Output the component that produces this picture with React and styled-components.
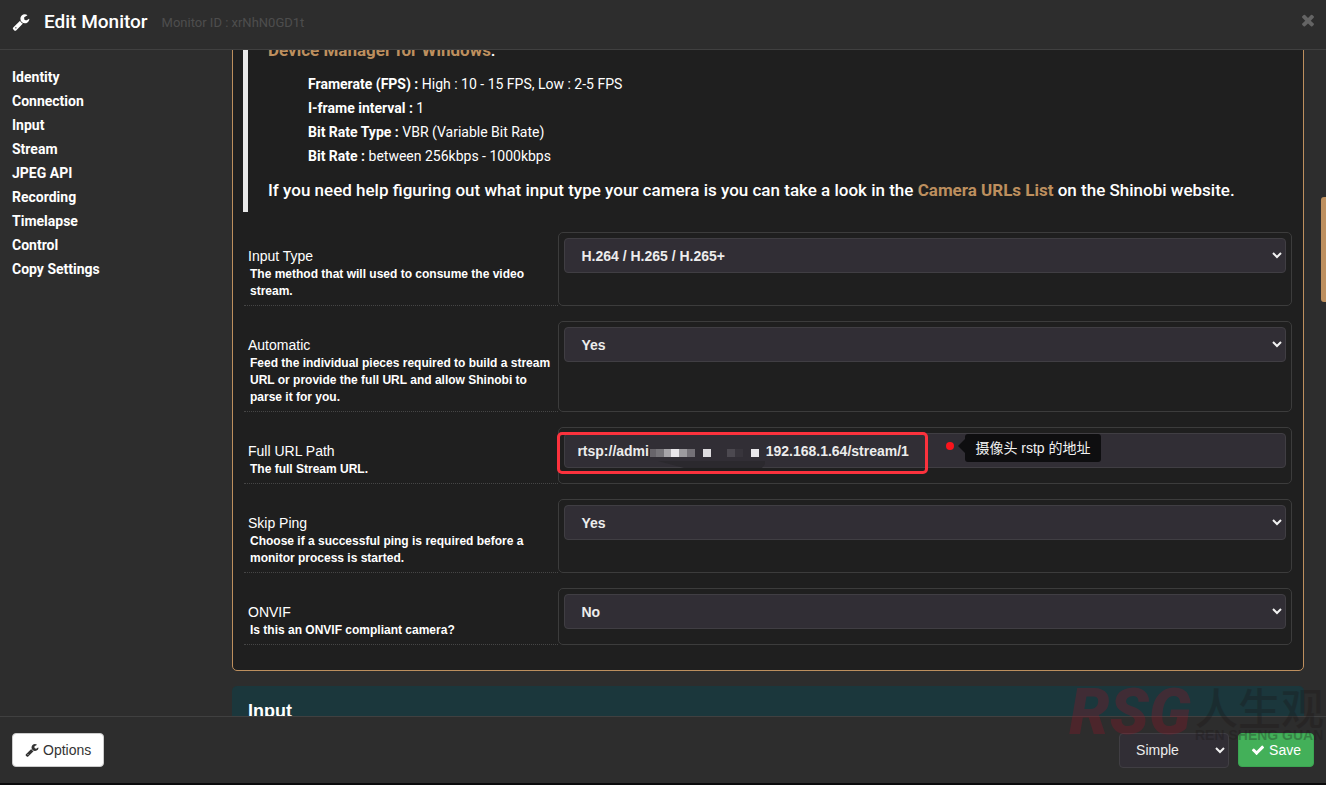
import React, { useState } from "react";
import styled, { createGlobalStyle } from "styled-components";

const GlobalStyle = createGlobalStyle`
* { box-sizing: border-box; }
body {
  margin: 0;
  background: #0b0b0c;
  color: #fff;
  font-family: Roboto, sans-serif;
  font-size: 14px;
  line-height: 20px;
}
`;

const Modal = styled.div`
position: relative;
display: flex;
flex-direction: column;
height: 100vh;
overflow: hidden;
background: #2d2d2d;
border-bottom: 2px solid #0b0b0c;
`;

const Header = styled.header`
display: flex;
flex: none;
align-items: center;
height: 50px;
padding: 0 12px 6px;
border-bottom: 1px solid #404040;
`;

const Title = styled.h4`
margin: 0 14px;
font-size: 19px;
font-weight: 500;
`;

const MonitorId = styled.small`
flex: 1;
padding-top: 3px;
font-size: 13px;
color: #4d4d4d;
`;

const CloseButton = styled.button`
display: flex;
padding: 0;
margin: 0 -3px 4px 0;
border: 0;
background: none;
color: #646464;
`;

const Body = styled.div`
position: relative;
display: flex;
flex: 1;
min-height: 0;
overflow: hidden;
`;

const Sidebar = styled.nav`
display: flex;
flex: 0 0 232px;
flex-direction: column;
align-items: flex-start;
padding: 15px 12px;
`;

const SideLink = styled.a`
color: #fff;
font-weight: 700;
line-height: 24px;
text-decoration: none;
`;

const Content = styled.main`
flex: 1;
min-width: 0;
margin-top: -24px;
padding-right: 22px;
`;

const ScrollThumb = styled.div`
position: absolute;
top: 147px;
right: 0;
width: 5px;
height: 105px;
border-radius: 3px 0 0 3px;
background: #bd8f5e;
`;

const Panel = styled.section`
padding: 11px 11px 10px;
margin-bottom: 15px;
border: 1px solid #bd8f5e;
border-radius: 5px;
background: #1f1f1f;
`;

const Quote = styled.blockquote`
margin: 0 -1px 20px;
padding: 0 20px 10px;
border-left: 5px solid #e9e9e9;
font-size: 17px;
font-weight: 500;
line-height: 24px;
p { margin: 0; }
ul {
  margin: 10px 0;
  padding-left: 40px;
  list-style: none;
  font-size: 14px;
  font-weight: 400;
}
`;

const GoldLink = styled.a`
color: #bd8f5e;
font-weight: 700;
text-decoration: none;
`;

const Row = styled.div`
display: grid;
grid-template-columns: 30% 70%;
margin-bottom: 15px;
font-family: "Liberation Sans", Arial, sans-serif;
`;

const RowLabel = styled.label`
padding: 14px 4px 5px;
border-bottom: 1px dotted #464646;
`;

const Hint = styled.small`
display: block;
padding-left: 2px;
font-size: 12px;
font-weight: 700;
line-height: 17px;
`;

const Control = styled.div`
position: relative;
padding: 5px;
border: 1px solid #3c3c3c;
border-radius: 5px;
`;

const SelectWrap = styled.div`
position: relative;
width: ${props => props.$width || "100%"};
svg {
  position: absolute;
  top: 13px;
  right: 4px;
  pointer-events: none;
}
`;

const Select = styled.select`
display: block;
width: 100%;
height: 35px;
padding: 0 16px;
appearance: none;
border: 1px solid #403e43;
border-radius: 4px;
background: #312e35;
color: #ececec;
font: ${props => (props.$light ? 400 : 700)} 14px "Liberation Sans", Arial, sans-serif;
`;

const TextInput = styled.input`
display: block;
width: 100%;
height: 35px;
padding: 0 12px;
border: 1px solid #403e43;
border-radius: 4px;
background: #312e35;
color: #ececec;
font: 700 14px "Liberation Sans", Arial, sans-serif;
`;

const RedFrame = styled.div`
position: absolute;
top: 4px;
left: -2px;
width: 371px;
height: 42px;
border: 3px solid #fb323d;
border-radius: 5px;
pointer-events: none;
`;

const Mosaic = styled.svg`
position: absolute;
top: 16px;
left: 91px;
`;

const Note = styled.div`
position: absolute;
top: 6px;
left: 387px;
display: flex;
align-items: center;
`;

const Dot = styled.span`
width: 8px;
height: 8px;
margin: 0 4px 4px 0;
border-radius: 50%;
background: #fb141c;
`;

const Arrow = styled.span`
border: 7px solid transparent;
border-left: 0;
border-right-color: #0e0e10;
margin-bottom: 4px;
`;

const NoteText = styled.span`
padding: 4px 10px;
border-radius: 3px;
background: #0e0e10;
color: #f2f2f2;
font-family: "Liberation Sans", "Noto Sans CJK SC", sans-serif;
white-space: nowrap;
`;

const InputSection = styled.section`
padding: 15px 16px;
border-radius: 5px 5px 0 0;
background: #1b373c;
h3 {
  margin: 0;
  font: 700 18px/20px "Liberation Sans", Arial, sans-serif;
}
`;

const Footer = styled.footer`
display: flex;
flex: none;
align-items: center;
justify-content: space-between;
height: 67px;
padding: 0 12px;
border-top: 1px solid #404040;
`;

const Actions = styled.div`
display: flex;
align-items: center;
gap: 9px;
`;

const Button = styled.button`
display: flex;
align-items: center;
gap: 4px;
height: 34px;
padding: 0 12px;
border: 1px solid ${props => (props.$green ? "#3ba552" : "#ccc")};
border-radius: 4px;
background: ${props => (props.$green ? "#43b059" : "#fff")};
color: ${props => (props.$green ? "#fff" : "#333")};
font: 14px "Liberation Sans", Arial, sans-serif;
`;

const Watermark = styled.div`
position: absolute;
right: 2px;
bottom: 40px;
display: flex;
align-items: center;
gap: 4px;
opacity: 0.3;
pointer-events: none;
`;

const WaterLogo = styled.span`
color: #961428;
font: italic 900 64px/60px Roboto, sans-serif;
`;

const WaterName = styled.span`
display: flex;
flex-direction: column;
color: #1a1616;
font: 500 43px/44px "Noto Sans CJK SC", sans-serif;
small {
  font: 700 14px/14px "Liberation Sans", Arial, sans-serif;
}
`;

const icons = {
  wrench: "M448 1472q0-26-19-45t-45-19-45 19-19 45 19 45 45 19 45-19 19-45zm644-420l-682 682q-37 37-90 37-52 0-91-37l-106-108q-38-36-38-90 0-53 38-91l681-681q39 98 114.5 173.5t173.5 114.5zm634-435q0 39-23 106-47 134-164.5 217.5t-258.5 83.5q-185 0-316.5-131.5t-131.5-316.5 131.5-316.5 316.5-131.5q58 0 121.5 16.5t107.5 46.5q16 11 16 28t-16 28l-293 169v224l193 107q5-3 79-48.5t135.5-81 70.5-35.5q15 0 23.5 10t8.5 25z",
  times: "M1490 1322q0 40-28 68l-136 136q-28 28-68 28t-68-28l-294-294-294 294q-28 28-68 28t-68-28l-136-136q-28-28-28-68t28-68l294-294-294-294q-28-28-28-68t28-68l136-136q28-28 68-28t68 28l294 294 294-294q28-28 68-28t68 28l136 136q28 28 28 68t-28 68l-294 294 294 294q28 28 28 68z",
  check: "M1671 566q0 40-28 68l-724 724-136 136q-28 28-68 28t-68-28l-136-136-362-362q-28-28-28-68t28-68l136-136q28-28 68-28t68 28l294 295 656-657q28-28 68-28t68 28l136 136q28 28 28 68z"
};

const Icon = ({ name, size }) => (
  <svg width={size} height={size} viewBox="0 0 1792 1792" fill="currentColor" aria-hidden="true">
    <path d={icons[name]} />
  </svg>
);

const Dropdown = ({ options, width, light, ...rest }) => (
  <SelectWrap $width={width}>
    <Select $light={light} {...rest}>
      {options.map(o => <option key={o}>{o}</option>)}
    </Select>
    <svg width="10" height="8" viewBox="0 0 10 8" fill="none" stroke="#f2f2f2" strokeWidth="2">
      <path d="M1 2l4 4 4-4" />
    </svg>
  </SelectWrap>
);

const Field = ({ id, label, hint, children }) => (
  <Row>
    <RowLabel htmlFor={id}>
      {label}
      <Hint>{hint}</Hint>
    </RowLabel>
    <Control>{children}</Control>
  </Row>
);

const sections = ["Identity", "Connection", "Input", "Stream", "JPEG API", "Recording", "Timelapse", "Control", "Copy Settings"];

// x, width and colour of each block hiding the credentials
const blocks = [
  [0, 6, "#68656b"], [6, 8, "#77757a"], [14, 7, "#a7a5a9"], [21, 8, "#e9e7ea"],
  [29, 8, "#9c9a9e"], [37, 8, "#747177"], [53, 8, "#dedcdf"], [77, 8, "#4c4950"],
  [85, 8, "#38353c"], [101, 8, "#e9e7ea"]
];

const App = () => {
  const [url, setUrl] = useState("rtsp://admi" + "\u00a0".repeat(30) + "192.168.1.64/stream/1");

  return (
    <Modal>
      <GlobalStyle />
      <Header>
        <Icon name="wrench" size={18} />
        <Title>Edit Monitor</Title>
        <MonitorId>Monitor ID : xrNhN0GD1t</MonitorId>
        <CloseButton aria-label="Close"><Icon name="times" size={18} /></CloseButton>
      </Header>
      <Body>
        <Sidebar>
          {sections.map(s => <SideLink key={s} href="#">{s}</SideLink>)}
        </Sidebar>
        <Content>
          <Panel>
            <Quote>
              <p><GoldLink href="#">Device Manager for Windows</GoldLink>.</p>
              <ul>
                <li><b>Framerate (FPS) :</b> High : 10 - 15 FPS, Low : 2-5 FPS</li>
                <li><b>I-frame interval :</b> 1</li>
                <li><b>Bit Rate Type :</b> VBR (Variable Bit Rate)</li>
                <li><b>Bit Rate :</b> between 256kbps - 1000kbps</li>
              </ul>
              <p>
                If you need help figuring out what input type your camera is you can take a look in the{" "}
                <GoldLink href="#">Camera URLs List</GoldLink> on the Shinobi website.
              </p>
            </Quote>
            <Field id="type" label="Input Type" hint="The method that will used to consume the video stream.">
              <Dropdown id="type" options={["H.264 / H.265 / H.265+", "JPEG", "MJPEG"]} />
            </Field>
            <Field id="auto" label="Automatic" hint="Feed the individual pieces required to build a stream URL or provide the full URL and allow Shinobi to parse it for you.">
              <Dropdown id="auto" options={["Yes", "No"]} />
            </Field>
            <Field id="url" label="Full URL Path" hint="The full Stream URL.">
              <TextInput id="url" value={url} onChange={e => setUrl(e.target.value)} />
              <Mosaic width="116" height="24" viewBox="0 0 116 24">
                <path d="M8 17h107v3l-3 4H34z" fill="#2b292e" />
                {blocks.map(([x, w, fill]) => <rect key={x} x={x} y="5" width={w} height="8" fill={fill} />)}
              </Mosaic>
              <RedFrame />
              <Note>
                <Dot />
                <Arrow />
                <NoteText>摄像头 rstp 的地址</NoteText>
              </Note>
            </Field>
            <Field id="ping" label="Skip Ping" hint="Choose if a successful ping is required before a monitor process is started.">
              <Dropdown id="ping" options={["Yes", "No"]} />
            </Field>
            <Field id="onvif" label="ONVIF" hint="Is this an ONVIF compliant camera?">
              <Dropdown id="onvif" options={["No", "Yes"]} />
            </Field>
          </Panel>
          <InputSection><h3>Input</h3></InputSection>
        </Content>
        <ScrollThumb />
      </Body>
      <Footer>
        <Button><Icon name="wrench" size={14} />Options</Button>
        <Actions>
          <Dropdown light width="110px" aria-label="Mode" options={["Simple", "Advanced"]} />
          <Button $green><Icon name="check" size={14} />Save</Button>
        </Actions>
      </Footer>
      <Watermark>
        <WaterLogo>RSG</WaterLogo>
        <WaterName>人生观<small>REN SHENG GUAN</small></WaterName>
      </Watermark>
    </Modal>
  );
};

export default App;
